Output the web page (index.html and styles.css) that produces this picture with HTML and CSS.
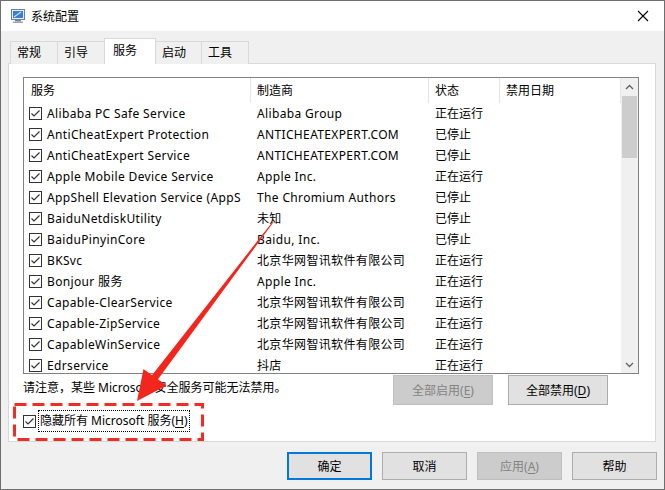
FILE: index.html
```html
<!DOCTYPE html>
<html lang="zh-CN">
<head>
<meta charset="utf-8">
<title>系统配置</title>
<link rel="stylesheet" href="styles.css">
</head>
<body>
<div class="window">
  <div class="titlebar">
    <svg class="app-icon" width="16" height="16" viewBox="0 0 16 16">
      <rect x="1.5" y="1.5" width="13" height="10" fill="#e8eef5" stroke="#6f7f95"/>
      <rect x="3" y="3" width="10" height="7" fill="#3a7fd5"/>
      <path d="M4 9 L11 4" stroke="#bfe0ff" stroke-width="1.2"/>
      <rect x="5" y="12" width="6" height="1.5" fill="#7d8898"/>
      <rect x="3" y="13.5" width="10" height="1.5" fill="#9aa4b2"/>
    </svg>
    <span class="title">系统配置</span>
    <svg class="close" width="12" height="12" viewBox="0 0 12 12">
      <path d="M1 1 L11 11 M11 1 L1 11" stroke="#000" stroke-width="1.1"/>
    </svg>
  </div>

  <div class="main">
    <div class="tabs">
      <div class="tab w48">常规</div>
      <div class="tab w48">引导</div>
      <div class="tab active">服务</div>
      <div class="tab w47">启动</div>
      <div class="tab w48">工具</div>
    </div>
    <div class="panel">
      <div class="list">
        <div class="list-body">
          <div class="row head">
            <div class="c c1">服务</div>
            <div class="c c2">制造商</div>
            <div class="c c3">状态</div>
            <div class="c c4">禁用日期</div>
          </div>
          <div class="rows">
            <div class="row"><div class="c c1"><span class="cb"></span>Alibaba PC Safe Service</div><div class="c c2">Alibaba Group</div><div class="c c3">正在运行</div><div class="c c4"></div></div>
            <div class="row"><div class="c c1"><span class="cb"></span>AntiCheatExpert Protection</div><div class="c c2">ANTICHEATEXPERT.COM</div><div class="c c3">已停止</div><div class="c c4"></div></div>
            <div class="row"><div class="c c1"><span class="cb"></span>AntiCheatExpert Service</div><div class="c c2">ANTICHEATEXPERT.COM</div><div class="c c3">已停止</div><div class="c c4"></div></div>
            <div class="row"><div class="c c1"><span class="cb"></span>Apple Mobile Device Service</div><div class="c c2">Apple Inc.</div><div class="c c3">正在运行</div><div class="c c4"></div></div>
            <div class="row"><div class="c c1"><span class="cb"></span>AppShell Elevation Service (AppS</div><div class="c c2">The Chromium Authors</div><div class="c c3">已停止</div><div class="c c4"></div></div>
            <div class="row"><div class="c c1"><span class="cb"></span>BaiduNetdiskUtility</div><div class="c c2">未知</div><div class="c c3">已停止</div><div class="c c4"></div></div>
            <div class="row"><div class="c c1"><span class="cb"></span>BaiduPinyinCore</div><div class="c c2">Baidu, Inc.</div><div class="c c3">已停止</div><div class="c c4"></div></div>
            <div class="row"><div class="c c1"><span class="cb"></span>BKSvc</div><div class="c c2">北京华网智讯软件有限公司</div><div class="c c3">正在运行</div><div class="c c4"></div></div>
            <div class="row"><div class="c c1"><span class="cb"></span>Bonjour 服务</div><div class="c c2">Apple Inc.</div><div class="c c3">正在运行</div><div class="c c4"></div></div>
            <div class="row"><div class="c c1"><span class="cb"></span>Capable-ClearService</div><div class="c c2">北京华网智讯软件有限公司</div><div class="c c3">正在运行</div><div class="c c4"></div></div>
            <div class="row"><div class="c c1"><span class="cb"></span>Capable-ZipService</div><div class="c c2">北京华网智讯软件有限公司</div><div class="c c3">正在运行</div><div class="c c4"></div></div>
            <div class="row"><div class="c c1"><span class="cb"></span>CapableWinService</div><div class="c c2">北京华网智讯软件有限公司</div><div class="c c3">正在运行</div><div class="c c4"></div></div>
            <div class="row"><div class="c c1"><span class="cb"></span>Edrservice</div><div class="c c2">抖店</div><div class="c c3">正在运行</div><div class="c c4"></div></div>
          </div>
        </div>
        <div class="scrollbar">
          <div class="sb-btn">
            <svg width="9" height="6" viewBox="0 0 9 6"><path d="M1 5 L4.5 1.5 L8 5" fill="none" stroke="#606060" stroke-width="1.3"/></svg>
          </div>
          <div class="sb-track"><div class="sb-thumb"></div></div>
          <div class="sb-btn">
            <svg width="9" height="6" viewBox="0 0 9 6"><path d="M1 1 L4.5 4.5 L8 1" fill="none" stroke="#606060" stroke-width="1.3"/></svg>
          </div>
        </div>
      </div>

      <div class="actions">
        <div class="note">请注意，某些 Microsoft 安全服务可能无法禁用。</div>
        <div class="btn wide disabled">全部启用(<u>E</u>)</div>
        <div class="btn wide">全部禁用(<u>D</u>)</div>
      </div>

      <div class="hide-row">
        <span class="cb"></span>
        <span class="focus">隐藏所有 Microsoft 服务(<u>H</u>)</span>
      </div>
    </div>

    <div class="footer">
      <div class="btn foot default">确定</div>
      <div class="btn foot">取消</div>
      <div class="btn foot disabled">应用(<u>A</u>)</div>
      <div class="btn foot">帮助</div>
    </div>
  </div>

  <svg class="annot" width="665" height="490" viewBox="0 0 665 490">
    <rect x="14.5" y="404.5" width="188" height="35" fill="none" stroke="#ef2d24" stroke-width="3" stroke-dasharray="12 6"/>
    <polygon fill="#f2261c" points="272.6,221.7 152,375.2 143.5,369 137,401 166.5,385.6 158,379.3 273.4,222.3"/>
  </svg>
</div>
</body>
</html>
```
FILE: styles.css
```css
* { box-sizing: border-box; }
html, body { margin: 0; padding: 0; background: #f0f0f0; }
body {
  font-family: "Noto Sans", "Noto Sans CJK SC", sans-serif;
  font-size: 12px;
  color: #000;
}
.window {
  position: relative;
  width: 665px;
  height: 490px;
  border: 1px solid #6e6e6e;
  background: #f0f0f0;
  display: flex;
  flex-direction: column;
}
.titlebar {
  height: 30px;
  background: #fff;
  display: flex;
  align-items: center;
  padding-left: 9px;
}
.app-icon { display: block; }
.title { margin-left: 5px; font-size: 12px; }
.close { margin-left: auto; margin-right: 15px; }

.main {
  padding: 7px 8px 0 7px;
  display: flex;
  flex-direction: column;
}
.tabs {
  display: flex;
  align-items: flex-end;
  height: 26px;
  padding-left: 2px;
  margin-bottom: -1px;
  position: relative;
  z-index: 1;
}
.tab {
  height: 23px;
  border: 1px solid #d9d9d9;
  border-bottom: none;
  background: #f0f0f0;
  padding: 3px 0 0 6px;
  margin-left: -1px;
  line-height: 16px;
}
.tab:first-child { margin-left: 0; }
.w48 { width: 48px; }
.w47 { width: 47px; }
.tab.active {
  width: 52px;
  height: 26px;
  background: #fff;
  padding-top: 4px;
  padding-left: 8px;
}
.panel {
  border: 1px solid #d9d9d9;
  background: #fff;
  height: 379px;
  padding: 13px 16px 0 14px;
}
.list {
  width: 616px;
  height: 297px;
  border: 1px solid #828282;
  display: flex;
  overflow: hidden;
  background: #fff;
}
.list-body {
  width: 597px;
  display: flex;
  flex-direction: column;
}
.row {
  display: grid;
  grid-template-columns: 227px 178px 71px 121px;
  height: 21px;
  align-items: center;
}
.row.head { height: 25px; align-items: stretch; }
.row.head .c {
  border-right: 1px solid #e5e5e5;
  display: flex;
  align-items: center;
  padding-bottom: 1px;
  letter-spacing: 0;
}
.rows { overflow: hidden; flex: 1; }
.c {
  white-space: nowrap;
  overflow: hidden;
  line-height: 21px;
}
.rows .c1, .rows .c2 { letter-spacing: 0.35px; }
.c1 { padding-left: 7px; display: flex; align-items: center; }
.rows .c1 { padding-left: 5px; }
.c2 { padding-left: 6px; }
.c3 { padding-left: 6px; }
.c4 { padding-left: 6px; }
.cb {
  flex: none;
  display: inline-block;
  width: 13px;
  height: 13px;
  border: 1px solid #333;
  background: #fff url("data:image/svg+xml,%3Csvg xmlns='http://www.w3.org/2000/svg' width='11' height='11' viewBox='0 0 11 11'%3E%3Cpath d='M1.5 5.5 L4 8 L9.5 2.5' fill='none' stroke='%23333' stroke-width='1.2'/%3E%3C/svg%3E") center/11px 11px no-repeat;
  margin-right: 5px;
}
.scrollbar {
  width: 17px;
  background: #f0f0f0;
  display: flex;
  flex-direction: column;
}
.sb-btn {
  height: 17px;
  display: flex;
  align-items: center;
  justify-content: center;
}
.sb-track { flex: 1; padding: 1px 0 0 1px; }
.sb-thumb { width: 15px; height: 62px; background: #cdcdcd; }

.actions {
  display: flex;
  align-items: flex-start;
  height: 30px;
  margin-top: 1px;
}
.note { padding-top: 3px; }
.btn {
  display: flex;
  align-items: center;
  justify-content: center;
  background: #e1e1e1;
  border: 1px solid #adadad;
}
.btn.wide { width: 100px; height: 30px; }
.btn.wide.disabled { margin-left: auto; }
.btn.wide + .btn.wide { margin-left: 15px; margin-right: 31px; }
.btn.disabled { background: #cccccc; border-color: #bfbfbf; color: #838383; }
u { text-decoration: underline; text-underline-offset: 2px; }

.hide-row {
  display: flex;
  align-items: center;
  margin-top: 5px;
  height: 22px;
}
.hide-row .cb { margin-right: 2px; }
.focus {
  border: 1px dotted #000;
  height: 22px;
  line-height: 20px;
  padding: 0 1px;
}

.footer {
  display: flex;
  justify-content: flex-end;
  gap: 10px;
  margin-top: 10px;
  margin-right: -1px;
}
.btn.foot { width: 85px; height: 28px; }
.btn.default { border: 2px solid #0078d7; }

.annot {
  position: absolute;
  left: -1px;
  top: -1px;
  pointer-events: none;
}
```
